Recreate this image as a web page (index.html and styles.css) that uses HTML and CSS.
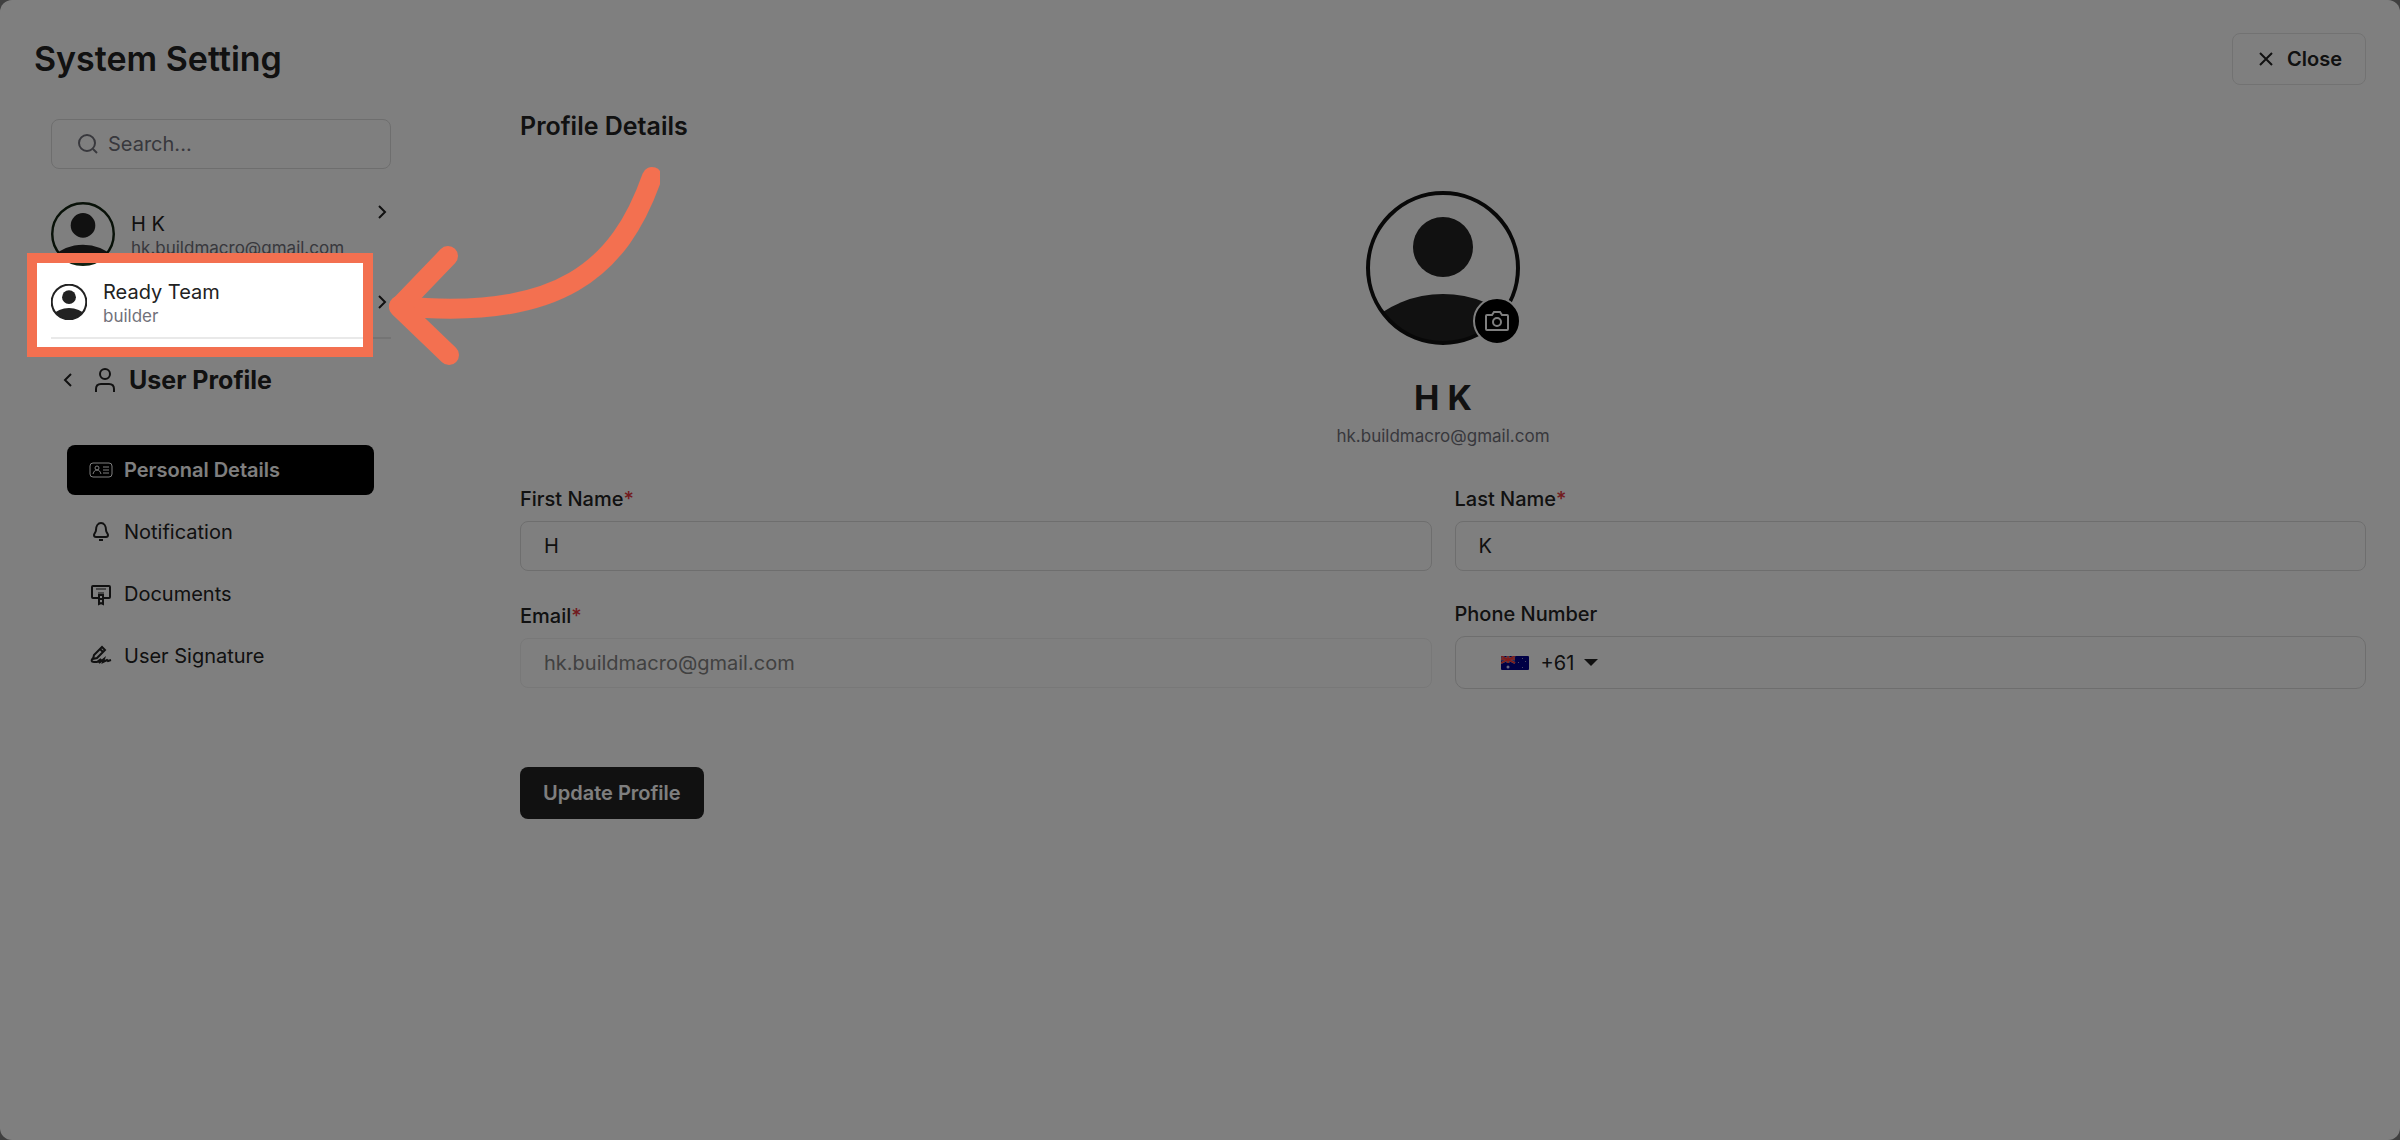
FILE: index.html
```
<!DOCTYPE html>
<html lang="en">
<head>
<meta charset="utf-8">
<title>System Setting</title>
<link rel="stylesheet" href="styles.css">
</head>
<body>

<!-- shared avatar drawing -->
<svg class="defs" aria-hidden="true">
	<symbol id="avatar" viewBox="0 0 156 156">
		<clipPath id="avatar_clip"><circle cx="78" cy="78" r="76"/></clipPath>
		<circle cx="78" cy="57" r="30" fill="#222" stroke="none"/>
		<circle cx="78" cy="213" r="109" fill="#222" stroke="none" clip-path="url(#avatar_clip)"/>
		<circle cx="78" cy="78" r="75" fill="none"/>
	</symbol>
	<symbol id="chevron" viewBox="0 0 10 16">
		<path d="M2 2l6 6-6 6" fill="none" stroke="currentColor" stroke-width="2"/>
	</symbol>
</svg>

<div class="modal">
	<header class="top_bar">
		<h1>System Setting</h1>
		<button type="button" class="btn_close">
			<svg width="14" height="14" viewBox="0 0 14 14"><path d="M1 1l12 12M13 1L1 13" fill="none" stroke="currentColor" stroke-width="2"/></svg>
			Close
		</button>
	</header>

	<div class="columns">
		<aside class="sidebar">
			<div class="search_box">
				<svg width="20" height="20" viewBox="0 0 20 20"><circle cx="9" cy="9" r="8"/><path d="M15 15l4 4"/></svg>
				<input type="search" id="search" placeholder="Search..." aria-label="Search">
			</div>

			<a href="#profile" class="account">
				<svg class="avatar_md"><use href="#avatar"/></svg>
				<span class="account_text"><span class="name">H K</span><span class="sub">hk.buildmacro@gmail.com</span></span>
				<svg class="chevron chevron_top"><use href="#chevron"/></svg>
			</a>
			<a href="#team" class="account team">
				<svg class="avatar_sm"><use href="#avatar"/></svg>
				<span class="account_text"><span class="name">Ready Team</span><span class="sub">builder</span></span>
				<svg class="chevron"><use href="#chevron"/></svg>
			</a>

			<div class="section_title">
				<button type="button" class="btn_back" aria-label="Back">
					<svg width="10" height="16" viewBox="0 0 10 16"><path d="M8 2L2 8l6 6" fill="none" stroke="currentColor" stroke-width="2"/></svg>
				</button>
				<svg width="20" height="24" viewBox="0 0 20 24" fill="none" stroke="#222" stroke-width="2"><circle cx="10" cy="6" r="5"/><path d="M1 24v-3c0-3 2-5 5-5h8c3 0 5 2 5 5v3"/></svg>
				<h2>User Profile</h2>
			</div>

			<nav class="menu">
				<a href="#details" class="active">
					<svg viewBox="0 0 24 24"><rect x="1" y="5" width="22" height="14" rx="3"/><circle cx="8" cy="10" r="2"/><path d="M4 16c1-3 2-4 4-4s3 1 4 4M14 9h6M14 12h6M14 15h6"/></svg>
					Personal Details
				</a>
				<a href="#notification">
					<svg viewBox="0 0 24 24" stroke-width="2"><path d="M7 10c0-4 2-7 5-7s5 3 5 7c0 2 2 4 2 5 0 2-1 2-2 2H7c-1 0-2 0-2-2 0-1 2-3 2-5zM10 20h4"/></svg>
					Notification
				</a>
				<a href="#documents">
					<svg viewBox="0 0 24 24" stroke-width="2"><path d="M9 16H4c-1 0-1 0-1-1V5c0-1 0-1 1-1h16c1 0 1 0 1 1v10c0 1 0 1-1 1h-5"/><path d="M7 7h10M9 11h6" stroke-width="1"/><path d="M10 13h4v9l-2-1-2 1zM10 17h4"/></svg>
					Documents
				</a>
				<a href="#signature">
					<svg viewBox="0 0 24 24" stroke-width="2"><path d="M4 15l1-4 8-8 3 3-8 8zM11 5l3 3"/><path d="M4 14c-2 2-2 4 1 4h3l4-3-2 4 5-4-1 3 4-2 1 1 3-1"/></svg>
					User Signature
				</a>
			</nav>
		</aside>

		<main class="content">
			<h2>Profile Details</h2>

			<div class="profile">
				<div class="photo">
					<svg class="avatar_lg"><use href="#avatar"/></svg>
					<button type="button" class="btn_photo" aria-label="Change photo">
						<svg width="24" height="20" viewBox="0 0 24 20" fill="none" stroke="#fff" stroke-width="2"><path d="M2 4h5l2-3h6l2 3h5c1 0 1 0 1 1v13c0 1 0 1-1 1H2c-1 0-1 0-1-1V5c0-1 0-1 1-1z"/><circle cx="12" cy="11" r="4"/></svg>
					</button>
				</div>
				<h3>H K</h3>
				<span class="sub">hk.buildmacro@gmail.com</span>
			</div>

			<form>
				<div class="fields">
					<div class="field">
						<label for="first_name">First Name<span class="req">*</span></label>
						<input type="text" id="first_name" value="H">
					</div>
					<div class="field">
						<label for="last_name">Last Name<span class="req">*</span></label>
						<input type="text" id="last_name" value="K">
					</div>
					<div class="field">
						<label for="email">Email<span class="req">*</span></label>
						<input type="email" id="email" value="hk.buildmacro@gmail.com" disabled>
					</div>
					<div class="field">
						<label for="phone">Phone Number</label>
						<div class="phone">
							<svg class="flag" width="28" height="14" viewBox="0 0 28 14">
								<rect width="28" height="14" rx="1" fill="#00008b"/>
								<path d="M0 0l14 7M14 0L0 7" stroke="#aab" stroke-width="2"/>
								<path d="M7 0v7M0 3h14" stroke="#aab" stroke-width="3"/>
								<path d="M0 0l14 7M14 0L0 7M7 0v7M0 3h14" stroke="#f33" stroke-width="1.5"/>
								<circle cx="7" cy="11" r="1.5" fill="#ccf"/>
								<path d="M21 2h1v1h-1zM17 6h1v1h-1zM24 5h1v1h-1zM21 11h1v1h-1z" fill="#99c"/>
							</svg>
							<select aria-label="Country code"><option>+61</option></select>
							<svg class="caret" width="14" height="7" viewBox="0 0 14 7"><path d="M0 0h14L7 7z" fill="#222"/></svg>
							<input type="tel" id="phone">
						</div>
					</div>
				</div>
				<button type="submit" class="btn_update">Update Profile</button>
			</form>
		</main>
	</div>
</div>

<!-- guide step: dims everything but the team row -->
<div class="tour">
	<div class="spotlight"></div>
	<svg class="arrow" width="280" height="220" viewBox="0 0 280 220" fill="none" stroke="#f37050" stroke-width="20" stroke-linecap="round" stroke-linejoin="round">
		<path d="M272 17C240 108 180 162 19 146"/>
		<path d="M68 96L19 147L69 195"/>
	</svg>
</div>

</body>
</html>
```
FILE: styles.css
```
* {
box-sizing:border-box;
}

body {
margin:0;
background:#808080;
color:#222;
font-family:Inter, "Liberation Sans", sans-serif;
font-size:20px;
line-height:24px;
}

h1, h2, h3 {
margin:0;
font-weight:600;
}

a {
color:inherit;
text-decoration:none;
}

button, input, select {
font:inherit;
color:inherit;
}

svg {
flex:none;
}

.defs {
position:absolute;
width:0;
height:0;
}

.modal {
min-height:100vh;
padding:33px 34px;
background:#fff;
border-radius:12px;
}

.top_bar {
display:flex;
align-items:center;
justify-content:space-between;
height:52px;
}

.top_bar h1 {
font-size:34px;
line-height:48px;
}

.btn_close {
display:flex;
align-items:center;
gap:14px;
height:52px;
padding:0 23px 0 26px;
background:#fff;
border:1px solid #e4e4e4;
border-radius:8px;
font-weight:600;
}

.columns {
display:flex;
gap:129px;
}

/* sidebar */
.sidebar {
flex:none;
width:357px;
padding:34px 0 0 17px;
}

.search_box {
display:flex;
align-items:center;
gap:10px;
height:50px;
padding:0 26px;
border:1px solid #dcdcdc;
border-radius:8px;
}

.search_box svg {
fill:none;
stroke:#71717a;
stroke-width:2;
}

.search_box input {
flex:1;
min-width:0;
padding:0;
border:0;
outline:0;
background:none;
}

.search_box input::placeholder {
color:#71717a;
}

.account {
display:flex;
align-items:center;
gap:16px;
height:64px;
margin-top:33px;
}

.team {
height:73px;
margin-top:0;
border-bottom:2px solid #e9e9e9;
}

.account_text {
display:flex;
flex:1;
flex-direction:column;
padding-top:4px;
}

.sub {
color:#71717a;
font-size:17px;
}

.avatar_sm {
width:36px;
height:36px;
stroke:#222;
stroke-width:9;
}

.avatar_md {
width:64px;
height:64px;
stroke:#112211;
stroke-width:6;
}

.avatar_lg {
display:block;
width:156px;
height:156px;
stroke:#111;
stroke-width:4;
}

.chevron {
width:10px;
height:16px;
margin-right:4px;
}

.chevron_top {
align-self:flex-start;
margin-top:2px;
}

.section_title {
display:flex;
align-items:center;
padding:24px 12px 0;
}

.section_title h2 {
margin-left:14px;
font-size:25px;
line-height:34px;
font-weight:700;
}

.btn_back {
display:flex;
margin-right:22px;
padding:0;
border:0;
background:none;
}

.menu {
display:flex;
flex-direction:column;
gap:12px;
padding:48px 17px 0 16px;
}

.menu a {
display:flex;
align-items:center;
gap:11px;
height:50px;
padding:0 22px;
border-radius:8px;
}

.menu svg {
width:24px;
height:24px;
fill:none;
stroke:currentColor;
}

.menu .active {
background:#000;
color:#fff;
font-weight:600;
}

/* profile form */
.content {
flex:1;
min-width:0;
padding-top:24px;
}

.content h2 {
font-size:25px;
line-height:34px;
}

.profile {
display:flex;
flex-direction:column;
align-items:center;
padding-top:47px;
}

.photo {
position:relative;
}

.btn_photo {
position:absolute;
right:0;
bottom:1px;
display:flex;
align-items:center;
justify-content:center;
width:48px;
height:48px;
padding:0;
background:#000;
border:2px solid #fff;
border-radius:50%;
}

.profile h3 {
margin-top:28px;
font-size:34px;
line-height:48px;
font-weight:700;
}

.profile .sub {
line-height:28px;
}

.fields {
display:grid;
grid-template-columns:1fr 1fr;
align-items:center;
gap:31px 23px;
padding-top:37px;
}

.field {
display:flex;
flex-direction:column;
gap:10px;
}

.field label {
font-weight:500;
}

.req {
color:#e5363c;
}

.field > input, .phone {
width:100%;
height:50px;
padding:0 23px;
background:#fff;
border:1px solid #dcdcdc;
border-radius:8px;
}

.field > input:disabled {
border-color:#f0f0f0;
color:#828282;
}

.phone {
display:flex;
align-items:center;
height:53px;
padding-left:45px;
border-radius:10px;
}

.phone select {
appearance:none;
width:34px;
margin:0 9px 0 12px;
padding:0;
border:0;
background:none;
}

.phone input {
flex:1;
border:0;
outline:0;
background:none;
}

.btn_update {
height:52px;
margin-top:78px;
padding:0 23px;
background:#222;
border:0;
border-radius:8px;
color:#fff;
font-weight:600;
}

/* guide overlay */
.tour {
position:fixed;
inset:0;
overflow:hidden;
pointer-events:none;
}

.spotlight {
position:absolute;
left:27px;
top:253px;
width:346px;
height:104px;
border:10px solid #f37050;
box-shadow:0 0 0 3000px rgba(0,0,0,0.5);
}

.arrow {
position:absolute;
left:380px;
top:160px;
}
```
